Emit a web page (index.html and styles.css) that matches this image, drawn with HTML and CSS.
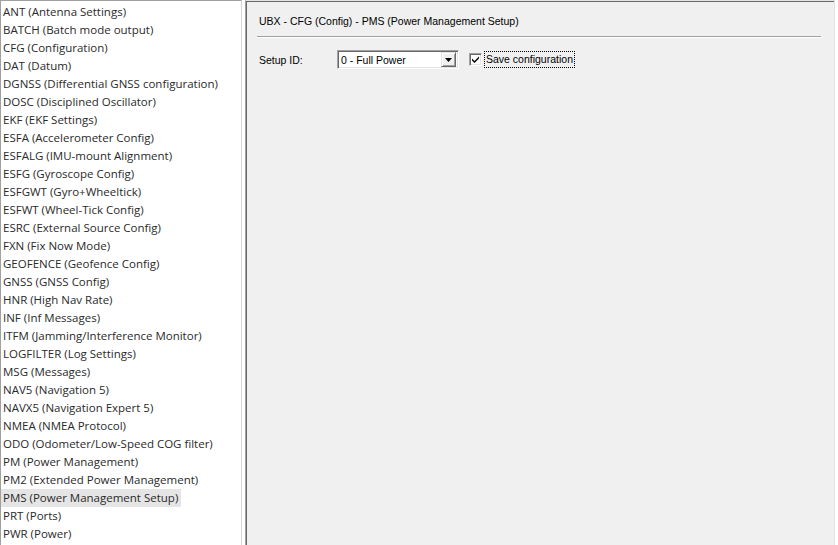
FILE: index.html
```html
<!DOCTYPE html>
<html>
<head>
<meta charset="utf-8">
<link rel="stylesheet" href="styles.css">
</head>
<body>
<div class="app">
  <ul class="list">
    <li>ANT (Antenna Settings)</li>
    <li>BATCH (Batch mode output)</li>
    <li>CFG (Configuration)</li>
    <li>DAT (Datum)</li>
    <li>DGNSS (Differential GNSS configuration)</li>
    <li>DOSC (Disciplined Oscillator)</li>
    <li>EKF (EKF Settings)</li>
    <li>ESFA (Accelerometer Config)</li>
    <li>ESFALG (IMU-mount Alignment)</li>
    <li>ESFG (Gyroscope Config)</li>
    <li>ESFGWT (Gyro+Wheeltick)</li>
    <li>ESFWT (Wheel-Tick Config)</li>
    <li>ESRC (External Source Config)</li>
    <li>FXN (Fix Now Mode)</li>
    <li>GEOFENCE (Geofence Config)</li>
    <li>GNSS (GNSS Config)</li>
    <li>HNR (High Nav Rate)</li>
    <li>INF (Inf Messages)</li>
    <li>ITFM (Jamming/Interference Monitor)</li>
    <li>LOGFILTER (Log Settings)</li>
    <li>MSG (Messages)</li>
    <li>NAV5 (Navigation 5)</li>
    <li>NAVX5 (Navigation Expert 5)</li>
    <li>NMEA (NMEA Protocol)</li>
    <li>ODO (Odometer/Low-Speed COG filter)</li>
    <li>PM (Power Management)</li>
    <li>PM2 (Extended Power Management)</li>
    <li class="sel"><span>PMS (Power Management Setup)</span></li>
    <li>PRT (Ports)</li>
    <li>PWR (Power)</li>
  </ul>
  <div class="panel">
    <div class="title">UBX - CFG (Config) - PMS (Power Management Setup)</div>
    <div class="sep"></div>
    <div class="row">
      <span class="lbl">Setup ID:</span>
      <div class="combo">
        <span class="val">0 - Full Power</span>
        <span class="btn"><svg width="7" height="4" viewBox="0 0 7 4"><path d="M0 0H7L3.5 4Z" fill="#000"/></svg></span>
      </div>
      <span class="chk"><svg width="9" height="9" viewBox="0 0 9 9"><path d="M1 3.5 L3.5 6 L8 1.5 V3.5 L3.5 8 L1 5.5 Z" fill="#000"/></svg></span>
      <span class="chklbl">Save configuration</span>
    </div>
  </div>
</div>
</body>
</html>
```

FILE: styles.css
```css
html, body {
  margin: 0;
  padding: 0;
  background: #ffffff;
  width: 838px;
  height: 545px;
  overflow: hidden;
}
.app {
  display: flex;
  height: 545px;
}
.list {
  list-style: none;
  margin: 0;
  padding: 2px 0 0 0;
  width: 240px;
  border-left: 1px solid #a0a0a0;
  border-top: 1px solid #a0a0a0;
  border-right: 1px solid #d8d8d8;
  background: #fff;
  font-family: "Open Sans", "Noto Sans", sans-serif;
  font-size: 11.5px;
  color: #2a2a2a;
  overflow: hidden;
  flex-shrink: 0;
}
.list li {
  height: 18px;
  line-height: 18px;
  white-space: nowrap;
  padding-left: 2px;
}
.list li.sel span {
  display: inline-block;
  background: #e5e5e5;
  padding-right: 3px;
  margin-left: -2px;
  padding-left: 2px;
}
.panel {
  margin-left: 3px;
  width: 590px;
  height: 545px;
  background: #f0f0f0;
  border-left: 1px solid #a0a0a0;
  border-top: 1px solid #e3e3e3;
  box-shadow: inset 1px 1px 0 #696969;
  border-right: 1px solid #e3e3e3;
  font-family: "Liberation Sans", Arial, sans-serif;
  font-size: 10.5px;
  color: #000;
  padding: 0 0 0 11px;
  box-sizing: border-box;
}
.title {
  margin-top: 13px;
  padding-left: 2px;
  height: 14px;
  line-height: 14px;
}
.sep {
  margin-top: 8px;
  width: 564px;
  height: 1px;
  background: #a0a0a0;
  border-bottom: 1px solid #fff;
}
.row {
  display: flex;
  align-items: center;
  margin-top: 12px;
  padding-left: 2px;
  height: 19px;
}
.lbl {
  width: 78px;
}
.combo {
  display: flex;
  align-items: center;
  width: 116px;
  height: 15px;
  background: #fff;
  border-top: 1px solid #a0a0a0;
  border-left: 1px solid #a0a0a0;
  border-right: 1px solid #fff;
  border-bottom: 1px solid #fff;
  box-shadow: inset 1px 1px 0 #696969, inset -1px -1px 0 #e3e3e3;
  padding: 1px 2px 1px 2px;
}
.val {
  flex: 1;
  padding-left: 1px;
}
.btn {
  width: 15px;
  height: 15px;
  box-sizing: border-box;
  background: #f0f0f0;
  border-top: 1px solid #e3e3e3;
  border-left: 1px solid #e3e3e3;
  border-right: 1px solid #696969;
  border-bottom: 1px solid #696969;
  box-shadow: inset 1px 1px 0 #fff, inset -1px -1px 0 #a0a0a0;
  display: flex;
  align-items: center;
  justify-content: center;
}
.chk {
  margin-left: 10px;
  width: 9px;
  height: 9px;
  background: #fff;
  border-top: 1px solid #a0a0a0;
  border-left: 1px solid #a0a0a0;
  border-right: 1px solid #fff;
  border-bottom: 1px solid #fff;
  box-shadow: inset 1px 1px 0 #696969, inset -1px -1px 0 #e3e3e3;
  padding: 1px;
  display: flex;
}
.chklbl {
  margin-left: 2px;
  border: 1px dotted #000;
  padding: 1px 1px 1px 1px;
  line-height: 13px;
}
```
